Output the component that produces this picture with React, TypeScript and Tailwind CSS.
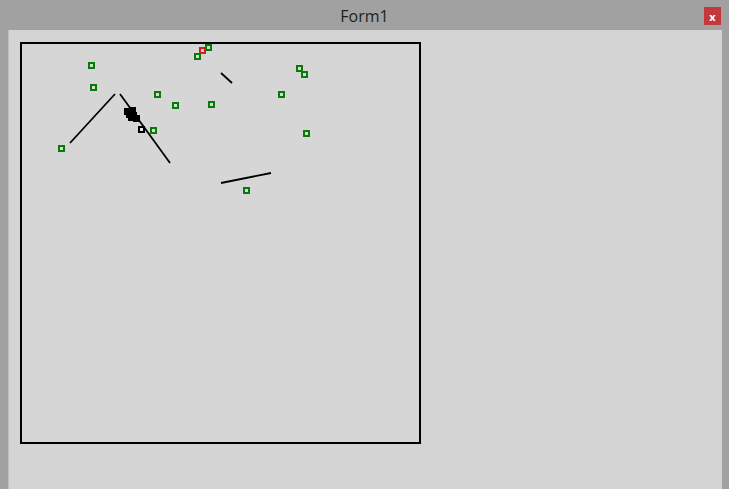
import React from 'react'

type Pt = { x: number; y: number }

const greens: Pt[] = [
  { x: 91, y: 65 },
  { x: 93, y: 87 },
  { x: 61, y: 148 },
  { x: 157, y: 94 },
  { x: 175, y: 105 },
  { x: 153, y: 130 },
  { x: 211, y: 104 },
  { x: 197, y: 56 },
  { x: 208, y: 47 },
  { x: 299, y: 68 },
  { x: 304, y: 74 },
  { x: 281, y: 94 },
  { x: 306, y: 133 },
  { x: 246, y: 190 },
]

const blacks: Pt[] = [
  { x: 141, y: 129 },
  { x: 127, y: 111 },
  { x: 132, y: 110 },
  { x: 129, y: 114 },
  { x: 133, y: 115 },
  { x: 136, y: 118 },
  { x: 131, y: 117 },
]

const lines = [
  [70, 143, 115, 94],
  [120, 94, 170, 163],
  [221, 73, 232, 83],
  [221, 183, 271, 173],
]

const Square = ({ p, color, fill }: { p: Pt; color: string; fill: string }) => (
  <rect x={p.x - 2} y={p.y - 2} width={5} height={5} fill={fill} stroke={color} strokeWidth={2} shapeRendering="crispEdges" />
)

const App = () => {
  return (
    <div className="w-[729px] h-[489px] flex flex-col bg-[#a1a1a1] overflow-hidden" style={{ fontFamily: '"Open Sans", "Noto Sans", sans-serif' }}>
      {/* Title bar */}
      <div className="h-[30px] flex items-center relative shrink-0">
        <div className="flex-1 text-center text-[16px] text-[#1e1e1e] pt-[1px]">Form1</div>
        <div className="absolute right-[8px] top-[7px] w-[17px] h-[18px] bg-[#c3383a] flex items-center justify-center text-white text-[11px] font-bold leading-none">
          x
        </div>
      </div>

      {/* Client area */}
      <div className="flex-1 ml-[8px] mr-[7px] bg-[#d4d4d4] border-l border-[#bdbdbd] pl-[11px] pt-[12px]">
        <div className="relative w-[401px] h-[402px] border-2 border-black bg-[#d6d6d6]">
          <svg className="absolute -left-[2px] -top-[2px] overflow-visible" width={401} height={402}>
            <g transform="translate(-20 -42)">
              {lines.map((l, i) => (
                <line key={i} x1={l[0]} y1={l[1]} x2={l[2]} y2={l[3]} stroke="#000" strokeWidth={1.8} />
              ))}
              {greens.map((p, i) => (
                <Square key={i} p={p} color="#0b780b" fill="#c8e4c8" />
              ))}
              <Square p={{ x: 202, y: 50 }} color="#d01e1e" fill="#f0c8c8" />
              {blacks.map((p, i) => (
                <Square key={i} p={p} color="#000" fill={i === 0 ? '#e8e8e8' : '#000'} />
              ))}
            </g>
          </svg>
        </div>
      </div>
    </div>
  )
}

export default App
